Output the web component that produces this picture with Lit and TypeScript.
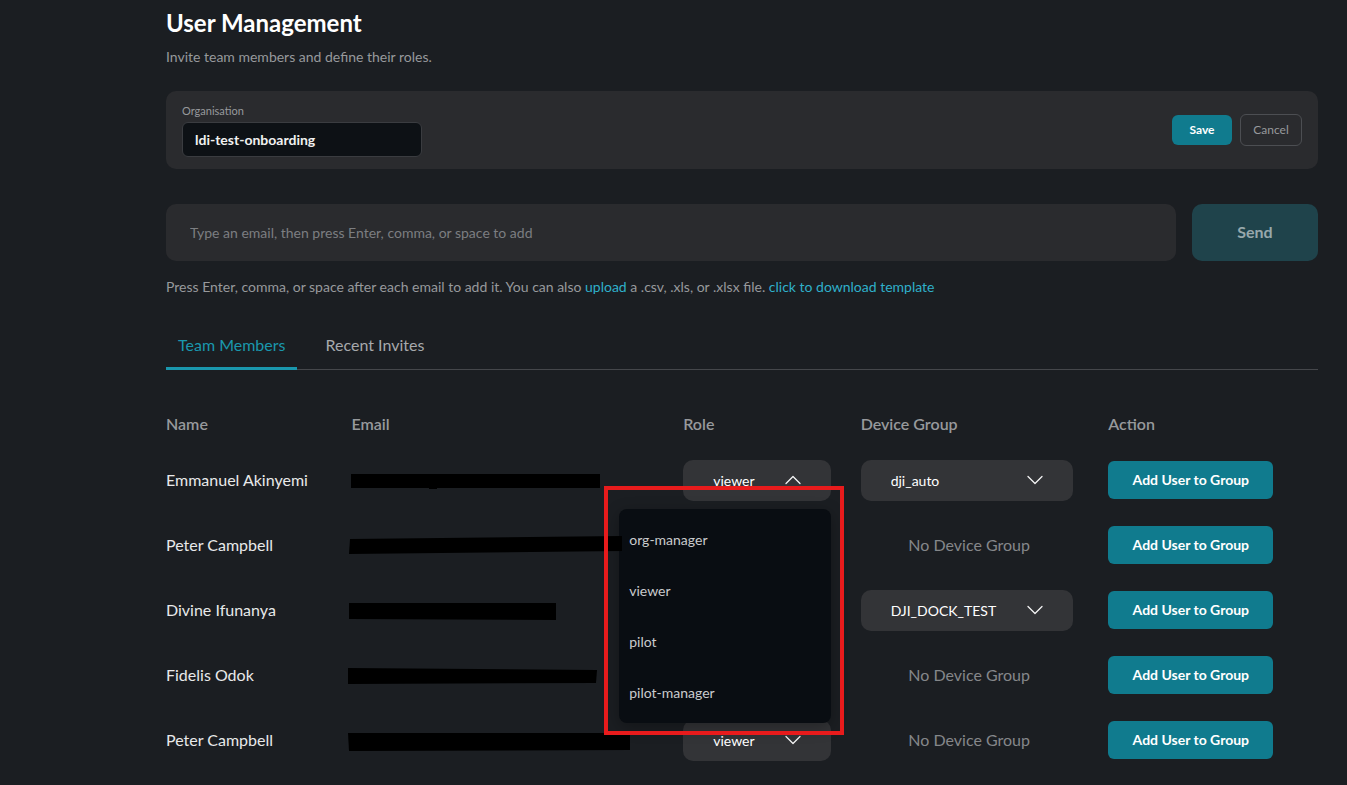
import { LitElement, html, css, svg, nothing } from "lit";
import { customElement, state } from "lit/decorators.js";

interface Member {
  name: string;
  mask: string;
  group: string | null;
}

const ROLES = ["org-manager", "viewer", "pilot", "pilot-manager"];

const MEMBERS: Member[] = [
  { name: "Emmanuel Akinyemi", mask: "3,4 252,4 252,18 89,18 89,19 81,19 81,18 3,18", group: "dji_auto" },
  { name: "Peter Campbell", mask: "2,4 274,1 274,16 1,19", group: null },
  { name: "Divine Ifunanya", mask: "1,3 208,3 208,20 1,19", group: "DJI_DOCK_TEST" },
  { name: "Fidelis Odok", mask: "0,3 249,5 248,18 0,19", group: null },
  { name: "Peter Campbell", mask: "0,3 282,3 282,20 1,21", group: null },
];

@customElement("app-root")
export class AppRoot extends LitElement {
  static styles = css`
    :host {
      display: block;
      min-height: 100vh;
      overflow: hidden;
      box-sizing: border-box;
      padding: 7px 29px 12px 166px;
      background: #1b1e22;
      color: #e8e9ea;
      font-family: Lato, "Liberation Sans", sans-serif;
      font-size: 16px;
      line-height: 24px;
    }
    * {
      box-sizing: border-box;
    }
    button,
    input,
    select {
      font: inherit;
      margin: 0;
    }
    button {
      cursor: pointer;
      border: 0;
    }
    h1 {
      margin: 0;
      font-size: 24px;
      line-height: 32px;
      font-weight: 700;
      color: #fff;
    }
    .subtitle {
      margin: 8px 0 24px;
      font-size: 14px;
      line-height: 20px;
      color: #97999c;
    }
    .card {
      display: flex;
      align-items: center;
      justify-content: space-between;
      padding: 12px 16px;
      background: #2a2b2e;
      border-radius: 10px;
    }
    .field {
      display: flex;
      flex-direction: column;
      gap: 3px;
    }
    .field label {
      font-size: 11px;
      line-height: 16px;
      color: #97999c;
    }
    .org {
      width: 240px;
      height: 35px;
      padding: 0 12px;
      font-size: 14px;
      font-weight: 700;
      color: #f1f1f1;
      background: #0d1115;
      border: 1px solid #3a3c40;
      border-radius: 6px;
    }
    .actions {
      display: flex;
      align-items: center;
      gap: 8px;
    }
    .save,
    .cancel {
      font-size: 12px;
      line-height: 18px;
      border-radius: 6px;
    }
    .save {
      min-width: 60px;
      padding: 6px 16px;
      font-weight: 700;
      color: #fff;
      background: #107b8e;
    }
    .cancel {
      min-width: 62px;
      padding: 6px 12px;
      color: #97999c;
      background: none;
      border: 1px solid #4c4e52;
    }
    .invite {
      display: flex;
      gap: 16px;
      margin-top: 35px;
    }
    .email {
      flex: 1;
      min-width: 0;
      height: 57px;
      padding: 0 24px;
      font-size: 14px;
      color: #e8e9ea;
      background: #2a2b2e;
      border: 0;
      border-radius: 10px;
    }
    .email::placeholder {
      color: #7c7e81;
      opacity: 1;
    }
    .send {
      width: 126px;
      padding: 0 0 2px;
      font-weight: 700;
      color: #97a8ac;
      background: #1f434b;
      border-radius: 10px;
    }
    .hint {
      margin: 16px 0 0;
      font-size: 14px;
      line-height: 20px;
      color: #97999c;
    }
    .hint a {
      color: #2fb0ca;
      text-decoration: none;
    }
    .tabs {
      display: flex;
      gap: 16px;
      margin-top: 28px;
      border-bottom: 1px solid #45474b;
    }
    .tab {
      margin-bottom: -1px;
      padding: 8px 12px 10px;
      color: #a7a9ac;
      background: none;
      border-bottom: 3px solid transparent;
      border-radius: 2px 2px 0 0;
    }
    .tab.active {
      color: #1a97ad;
      border-bottom-color: #1a97ad;
    }
    table {
      width: 100%;
      margin-top: 31px;
      border-collapse: collapse;
      table-layout: fixed;
    }
    th {
      height: 46px;
      padding: 0;
      text-align: left;
      font-weight: 600;
      color: #97999c;
    }
    td {
      height: 65px;
      padding: 0;
    }
    .c-name {
      width: 16.1%;
    }
    .c-email {
      width: 28.8%;
    }
    .c-role {
      width: 15.4%;
    }
    .c-group {
      width: 21.5%;
    }
    .mask {
      display: block;
      position: relative;
      z-index: 3;
      margin-left: -3px;
      overflow: visible;
    }
    .picker {
      position: relative;
      display: block;
      height: 41px;
      margin-top: 2px;
    }
    .picker.role {
      width: 148px;
    }
    .picker.group {
      width: 212px;
    }
    .picker select {
      appearance: none;
      display: block;
      width: 100%;
      height: 100%;
      padding: 0 30px;
      font-size: 14px;
      color: #fff;
      background: #333437;
      border: 0;
      border-radius: 10px;
    }
    .chevron {
      position: absolute;
      top: 10px;
      right: 28px;
      pointer-events: none;
    }
    .none {
      display: block;
      width: 217px;
      text-align: center;
      color: #85878a;
    }
    .menu {
      position: absolute;
      z-index: 2;
      top: 49px;
      right: 0;
      width: 212px;
      margin: 0;
      padding: 5px 0;
      list-style: none;
      background: #090d12;
      border-radius: 8px;
      box-shadow: 0 4px 16px rgba(0, 0, 0, 0.3);
    }
    .menu button {
      display: block;
      width: 100%;
      height: 51px;
      padding: 0 10px;
      font-size: 14px;
      text-align: left;
      color: #c9cbcd;
      background: none;
    }
    .callout {
      position: absolute;
      z-index: 4;
      top: 26px;
      right: -13px;
      width: 240px;
      height: 249px;
      border: 4px solid #e81b1c;
      pointer-events: none;
    }
    .add {
      display: block;
      width: 165px;
      height: 38px;
      padding: 0;
      font-size: 14px;
      font-weight: 700;
      color: #fff;
      background: #107b8e;
      border-radius: 6px;
    }
  `;

  @state() private openRow = 0;
  @state() private tab = 0;

  private chevron(up: boolean) {
    return html`<svg class="chevron" width="20" height="20" viewBox="0 0 20 20" fill="none"
      stroke="#f4f4f4" stroke-width="1.3" stroke-linecap="round" stroke-linejoin="round" aria-hidden="true">
      ${up ? svg`<path d="M3 13.5 10 6.5 17 13.5"/>` : svg`<path d="M3 6.5 10 13.5 17 6.5"/>`}
    </svg>`;
  }

  private toggleRole(e: Event, i: number) {
    e.preventDefault();
    this.openRow = this.openRow === i ? -1 : i;
  }

  private roleMenu() {
    return html`
      <ul class="menu">
        ${ROLES.map((r) => html`<li><button type="button" @click=${() => (this.openRow = -1)}>${r}</button></li>`)}
      </ul>
      <div class="callout"></div>
    `;
  }

  private row(m: Member, i: number) {
    const open = this.openRow === i;
    return html`
      <tr>
        <td>${m.name}</td>
        <td>
          <svg class="mask" width="284" height="20" viewBox="0 0 284 20" aria-hidden="true">
            <polygon points=${m.mask} fill="#000" />
          </svg>
        </td>
        <td>
          <div class="picker role">
            <select aria-label="Role of ${m.name}" @mousedown=${(e: Event) => this.toggleRole(e, i)}>
              ${ROLES.map((r) => html`<option ?selected=${r === "viewer"}>${r}</option>`)}
            </select>
            ${this.chevron(open)} ${open ? this.roleMenu() : nothing}
          </div>
        </td>
        <td>
          ${m.group
            ? html`<div class="picker group">
                <select aria-label="Device group of ${m.name}"><option>${m.group}</option></select>
                ${this.chevron(false)}
              </div>`
            : html`<span class="none">No Device Group</span>`}
        </td>
        <td><button class="add" type="button">Add User to Group</button></td>
      </tr>
    `;
  }

  render() {
    return html`
      <main>
        <h1>User Management</h1>
        <p class="subtitle">Invite team members and define their roles.</p>

        <section class="card">
          <div class="field">
            <label for="org">Organisation</label>
            <input id="org" class="org" type="text" value="ldi-test-onboarding" />
          </div>
          <div class="actions">
            <button class="save" type="button">Save</button>
            <button class="cancel" type="button">Cancel</button>
          </div>
        </section>

        <section class="invite">
          <input class="email" type="text" aria-label="Email addresses"
            placeholder="Type an email, then press Enter, comma, or space to add" />
          <button class="send" type="button">Send</button>
        </section>
        <p class="hint">
          Press Enter, comma, or space after each email to add it. You can also
          <a href="#upload">upload</a> a .csv, .xls, or .xlsx file.
          <a href="#template">click to download template</a>
        </p>

        <nav class="tabs">
          ${["Team Members", "Recent Invites"].map(
            (t, i) => html`<button type="button" class="tab ${this.tab === i ? "active" : ""}"
              @click=${() => (this.tab = i)}>${t}</button>`
          )}
        </nav>

        <table>
          <thead>
            <tr>
              <th class="c-name">Name</th>
              <th class="c-email">Email</th>
              <th class="c-role">Role</th>
              <th class="c-group">Device Group</th>
              <th>Action</th>
            </tr>
          </thead>
          <tbody>
            ${MEMBERS.map((m, i) => this.row(m, i))}
          </tbody>
        </table>
      </main>
    `;
  }
}
